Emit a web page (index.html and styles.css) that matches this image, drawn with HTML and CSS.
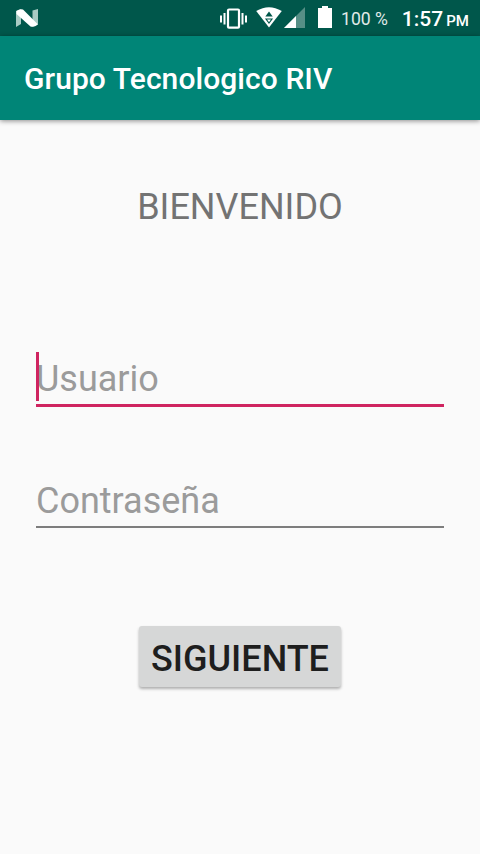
FILE: index.html
```html
<!DOCTYPE html>
<html lang="es">
<head>
<meta charset="utf-8">
<title>Grupo Tecnologico RIV</title>
<link rel="stylesheet" href="styles.css">
</head>
<body>
<div class="status">
  <svg class="logo" width="24" height="20" viewBox="0 0 24 20">
    <path d="M1 3l5-2v15l-5 3zM17.5 2.500l5.500-1.500v15l-5.500 3z" fill="#a9cbc4"/>
    <path d="M1.500 3Q5 .5 8 1.500L23 16.500Q19 19.500 15.500 18.500L1.500 6z" fill="#fff"/>
  </svg>
  <svg class="vibrate" width="29" height="22" viewBox="0 0 29 22">
    <rect x="9" y="2.500" width="11" height="18.200" rx="1" fill="none" stroke="#fff" stroke-width="2.200"/>
    <path d="M2 8.500v7M5.500 6v11.500M23.500 6v11.500M27 8.500v7" stroke="#fff" stroke-width="2"/>
  </svg>
  <svg class="wifi" width="26" height="22" viewBox="0 0 26 22">
    <path d="M.2 5Q13-2.700 25.800 5L13 21.500z" fill="#fff"/>
    <path d="M13 5.500l3.700 5H9.300z" fill="#00574b"/>
    <path d="M10 13h6l-3 4z" fill="none" stroke="#00574b" stroke-width="1.100"/>
  </svg>
  <svg class="signal" width="21" height="21" viewBox="0 0 21 21">
    <path d="M21 0v21H0z" fill="#568f86"/>
    <path d="M12 9v12H0z" fill="#fff"/>
  </svg>
  <svg class="battery" width="14" height="22" viewBox="0 0 14 22">
    <path d="M4 0h6v2h4v20H0V2h4z" fill="#fff"/>
  </svg>
  <span class="percent">100 %</span>
  <span class="clock">1:57 <small>PM</small></span>
</div>
<header class="appbar"><h1>Grupo Tecnologico RIV</h1></header>
<main>
  <h2>BIENVENIDO</h2>
  <div class="field focused"><span class="caret"></span><span class="hint">Usuario</span></div>
  <div class="field"><span class="hint">Contraseña</span></div>
  <button type="button">SIGUIENTE</button>
</main>
</body>
</html>
```

FILE: styles.css
```css
* { box-sizing: border-box; }
body {
  margin: 0;
  height: 854px;
  overflow: hidden;
  background: #fafafa;
  font-family: Roboto, sans-serif;
}
.status {
  height: 36px;
  padding: 0 11px 0 15px;
  display: flex;
  align-items: flex-start;
  background: #00574b;
  color: #fff;
  white-space: nowrap;
}
.status svg { flex: none; }
.logo { margin-top: 8px; }
.vibrate { margin: 7px 0 0 180px; }
.wifi { margin: 6px 0 0 8px; }
.signal { margin: 7px 0 0 2px; }
.battery { margin: 6px 0 0 13px; }
.percent {
  margin-left: 9px;
  font-size: 17.6px;
  line-height: 39px;
  color: #e0ebe9;
}
.clock {
  margin-left: auto;
  font-size: 21px;
  font-weight: 500;
  line-height: 39px;
}
.clock small { font-size: 15px; margin-left: -2px; }
.appbar {
  height: 84px;
  padding: 2px 24px 0;
  display: flex;
  align-items: center;
  background: #008577;
  box-shadow: 0 1px 5px rgba(0, 0, 0, .45);
}
h1 {
  margin: 0;
  font-size: 30px;
  font-weight: 500;
  line-height: 36px;
  letter-spacing: .07px;
  color: #fff;
}
main {
  padding: 66px 36px 0;
  display: flex;
  flex-direction: column;
  align-items: center;
}
h2 {
  margin: 0 0 117px;
  font-size: 36px;
  font-weight: 400;
  line-height: 42px;
  color: #737373;
}
.field {
  position: relative;
  width: 100%;
  height: 62px;
  padding-top: 14px;
  border-bottom: 2px solid #7d7d7d;
  font-size: 36px;
  line-height: 42px;
  color: #9b9b9b;
}
.field + .field { margin-top: 59px; }
.focused {
  padding-top: 13px;
  border-bottom: 3px solid #cf2460;
}
.caret {
  position: absolute;
  left: 0;
  top: 7px;
  width: 3px;
  height: 49px;
  background: #cf2460;
}
button {
  width: 202px;
  height: 61px;
  margin-top: 98px;
  padding: 5px 0 0;
  border: 0;
  border-radius: 3px;
  background: #d6d7d7;
  box-shadow: 0 2px 3px rgba(0, 0, 0, .3);
  font: 500 36px/42px Roboto, sans-serif;
  color: #1e1e1e;
}
```
